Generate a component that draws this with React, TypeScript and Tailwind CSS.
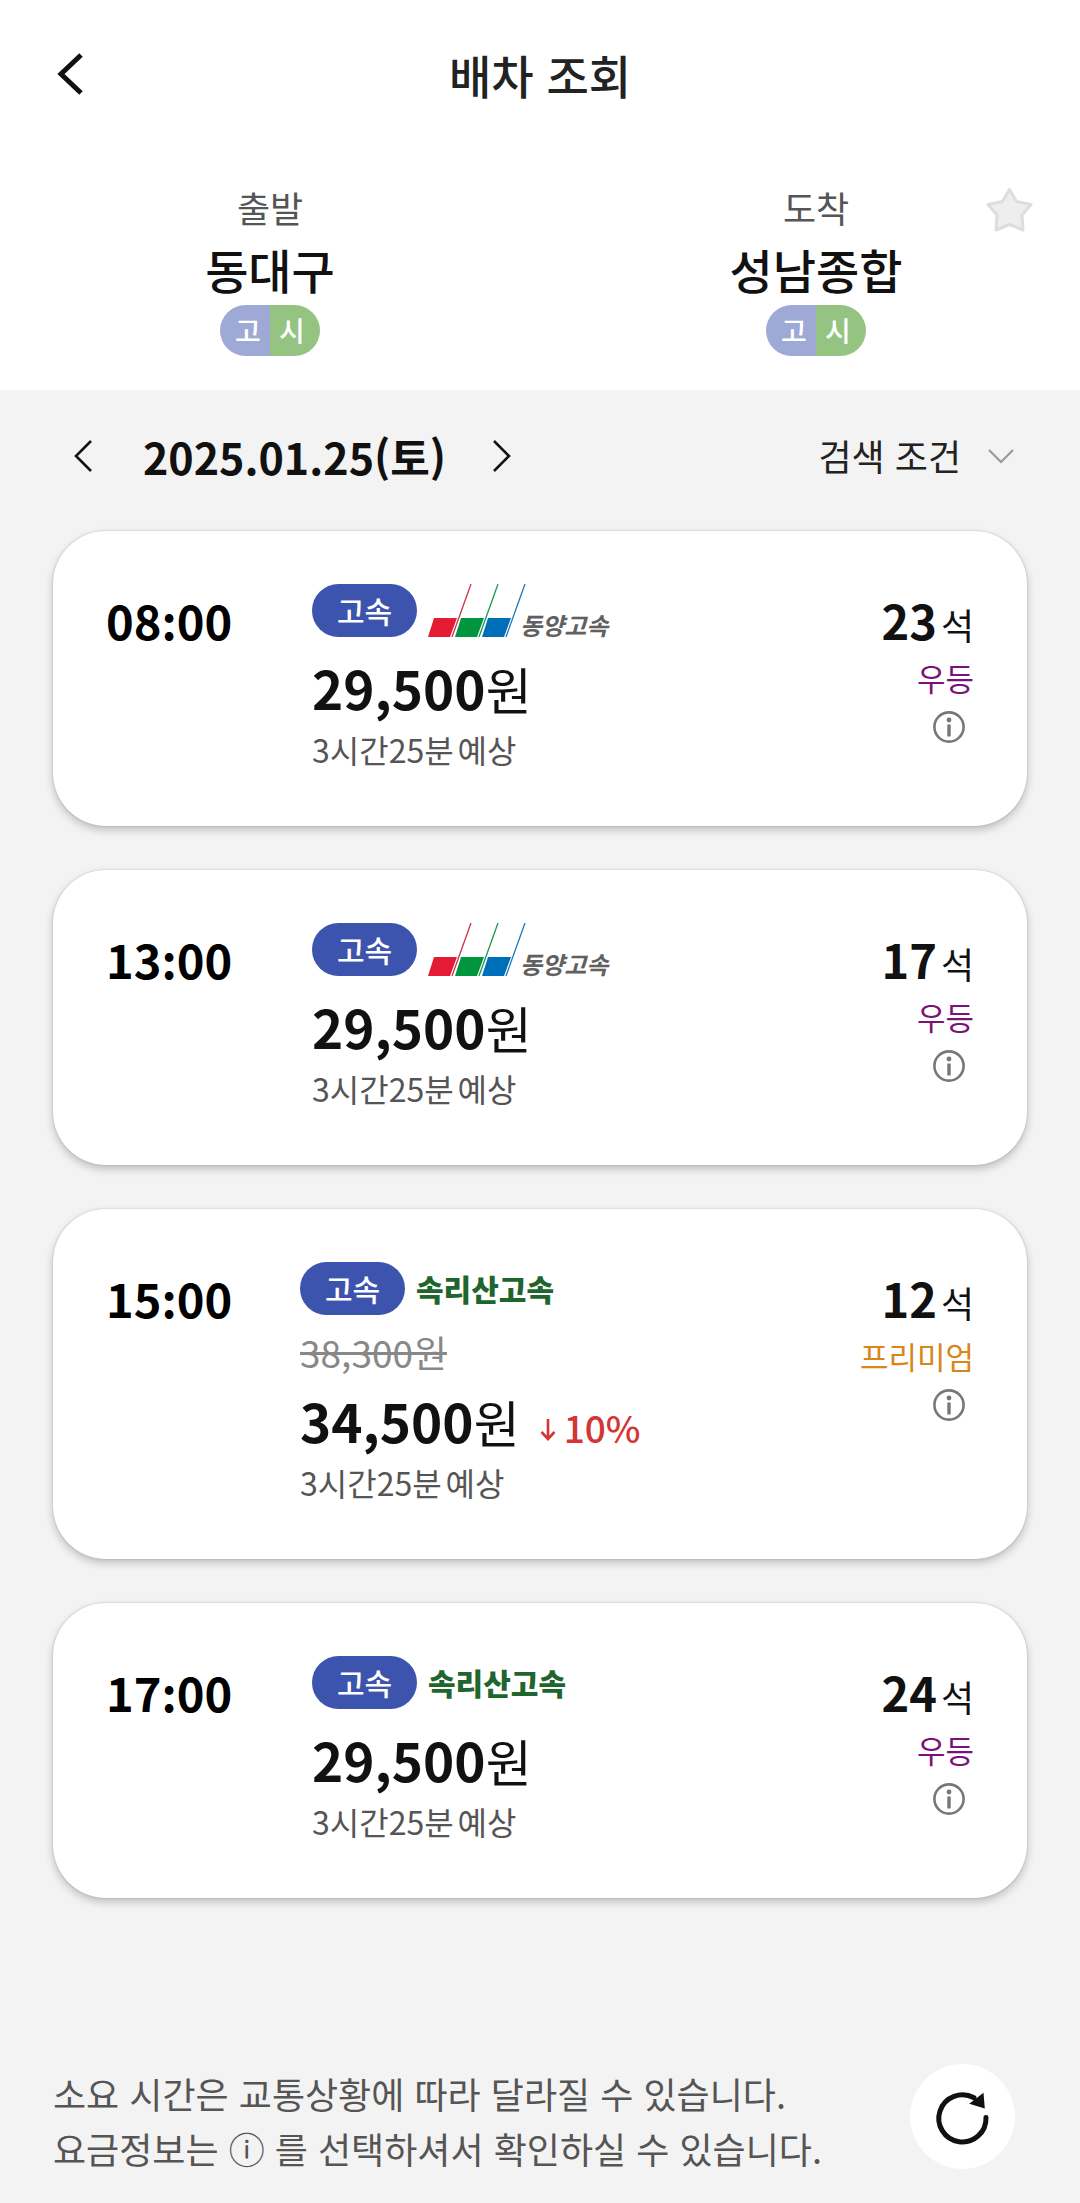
import clsx from "clsx";

type Company = "dongyang" | "songnisan";
type Grade = "우등" | "프리미엄";

interface Bus {
  time: string;
  company: Company;
  price: string;
  originalPrice?: string;
  discount?: string;
  hours: string;
  seats: number;
  grade: Grade;
}

const buses: Bus[] = [
  { time: "08:00", company: "dongyang", price: "29,500", hours: "3시간25분", seats: 23, grade: "우등" },
  { time: "13:00", company: "dongyang", price: "29,500", hours: "3시간25분", seats: 17, grade: "우등" },
  {
    time: "15:00",
    company: "songnisan",
    price: "34,500",
    originalPrice: "38,300원",
    discount: "10%",
    hours: "3시간25분",
    seats: 12,
    grade: "프리미엄",
  },
  { time: "17:00", company: "songnisan", price: "29,500", hours: "3시간25분", seats: 24, grade: "우등" },
];

function DongyangLogo() {
  return (
    <span className="flex items-end">
      <svg width="98" height="53" viewBox="0 0 98 53" fill="none">
        <path d="M6 34H29L22 53H0Z" fill="#e31b35" />
        <path d="M33 34H56L49 53H27Z" fill="#00953f" />
        <path d="M60 34H83L76 53H54Z" fill="#006fb9" />
        <path d="M43 0L24 53" stroke="#d0304c" strokeWidth="1.3" />
        <path d="M70 0L51 53" stroke="#1c9651" strokeWidth="1.3" />
        <path d="M97 0L78 53" stroke="#1c78b4" strokeWidth="1.3" />
      </svg>
      <span className="-mb-0.5 -ml-1.5 text-2xl/7 font-bold text-[#606060] italic">동양고속</span>
    </span>
  );
}

function SongnisanLogo() {
  return <span className="text-[30px]/[53px] font-black text-[#1f652e]">속리산고속</span>;
}

function StopTypes() {
  return (
    <div className="mt-1 flex h-[51px] overflow-hidden rounded-full text-[28px]/[51px] font-medium text-white">
      <span className="w-[50px] bg-[#9ea9d6] pl-1.5 text-center">고</span>
      <span className="w-[50px] bg-[#95c482] pr-1.5 text-center">시</span>
    </div>
  );
}

function Terminal({ label, name }: { label: string; name: string }) {
  return (
    <div className="flex flex-col items-center">
      <span className="text-[36px]/[56px] text-[#555]">{label}</span>
      <strong className="mt-0.5 text-[47px]/[64px] font-medium text-[#111]">{name}</strong>
      <StopTypes />
    </div>
  );
}

function InfoIcon() {
  return (
    <svg width="34" height="34" viewBox="0 0 34 34" fill="none">
      <circle cx="17" cy="17" r="14.6" stroke="#777" strokeWidth="2.6" />
      <circle cx="17" cy="10" r="2.4" fill="#777" />
      <path d="M17 14.5V26.5" stroke="#777" strokeWidth="3.4" />
    </svg>
  );
}

function BusCard({ bus }: { bus: Bus }) {
  return (
    <li className="flex rounded-[53px] bg-white p-[53px] shadow-[0_0_2px_rgba(0,0,0,0.2),0_4px_8px_rgba(0,0,0,0.22)]">
      {/* the Korean face raises the colon, the Japanese one keeps it on the baseline */}
      <time
        lang="en"
        className={clsx(
          "mt-1 shrink-0 font-['Noto_Sans_CJK_JP',sans-serif] text-[47px]/[64px] font-bold text-black",
          bus.discount ? "w-[194px]" : "w-[206px]",
        )}
      >
        {bus.time}
      </time>

      <div className="flex-1">
        <div className="flex h-[53px] items-center gap-[11px]">
          <span className="w-[105px] rounded-full bg-[#3c54ad] text-center text-[30px]/[53px] font-medium text-white">
            고속
          </span>
          {bus.company === "dongyang" ? <DongyangLogo /> : <SongnisanLogo />}
        </div>
        {bus.originalPrice && (
          <del className="mt-2.5 -mb-2.5 block text-[37px]/[55px] text-[#888]">{bus.originalPrice}</del>
        )}
        <div className="mt-3.5 flex items-baseline text-[#111]">
          <strong className="text-[53px]/[72px] font-bold">{bus.price}</strong>
          <span className="text-[50px]/[64px]">원</span>
          {bus.discount && (
            <span className="ml-5 flex items-baseline gap-2 text-[37px]/[55px] font-medium text-[#d43535]">
              <svg width="16" height="24" viewBox="0 0 16 24" fill="none" stroke="currentColor" strokeWidth="2.6">
                <path d="M8 0V19M1.5 13L8 20L14.5 13" />
              </svg>
              {bus.discount}
            </span>
          )}
        </div>
        <p className="mt-1 mb-0.5 flex gap-1 text-[32px]/[44px] text-[#555]">
          <span>{bus.hours}</span>
          <span>예상</span>
        </p>
      </div>

      <div className="mt-1 flex flex-col items-end">
        <p className="flex items-baseline gap-1 text-[#111]">
          <strong className="text-[47px]/[64px] font-bold">{bus.seats}</strong>
          <span className="text-[36px]/[55px]">석</span>
        </p>
        <span
          className={clsx(
            "mt-0.5 text-[31px]/[48px]",
            bus.grade === "프리미엄" ? "text-[#d9861a]" : "text-[#7a1377]",
          )}
        >
          {bus.grade}
        </span>
        <button type="button" className="mt-2 mr-2" aria-label="요금 정보">
          <InfoIcon />
        </button>
      </div>
    </li>
  );
}

export default function App() {
  return (
    <div
      lang="ko"
      className="min-h-screen bg-[#f3f3f3] font-['Noto_Sans_CJK_KR',sans-serif] text-[#111]"
    >
      <header className="bg-white">
        <div className="grid grid-cols-[1fr_auto_1fr] items-center px-14 pt-[38px]">
          <button type="button" className="justify-self-start" aria-label="뒤로">
            <svg width="30" height="44" viewBox="0 0 30 44" fill="none" stroke="#111" strokeWidth="5">
              <path d="M25 3L5 22L25 41" />
            </svg>
          </button>
          <h1 className="text-[46px]/[72px] font-medium text-[#222]">배차 조회</h1>
        </div>

        <div className="relative grid grid-cols-2 pt-[69px] pb-[34px]">
          <Terminal label="출발" name="동대구" />
          <div className="pl-3">
            <Terminal label="도착" name="성남종합" />
          </div>
          <button type="button" className="absolute top-[74px] right-[47px]" aria-label="즐겨찾기">
            <svg width="48" height="48" viewBox="0 0 48 48">
              <path
                d="M24.5 5.5L31.5 17.5L46 20.5L37 31L38 46L24.5 40.5L11 46L12 31L3 20.5L17.5 17.5Z"
                fill="#eee"
                stroke="#ddd"
                strokeWidth="3"
                strokeLinejoin="round"
              />
            </svg>
          </button>
        </div>
      </header>

      <main className="px-[53px]">
        <div className="flex h-[141px] items-center justify-between pr-3 pb-2.5 pl-5">
          <div className="flex items-center">
            <button type="button" aria-label="이전 날짜">
              <svg width="22" height="34" viewBox="0 0 22 34" fill="none" stroke="#111" strokeWidth="2.6">
                <path d="M18 2L3 17L18 32" />
              </svg>
            </button>
            <strong className="mr-11 ml-12 text-[43px]/[56px] font-bold">2025.01.25(토)</strong>
            <button type="button" aria-label="다음 날짜">
              <svg width="22" height="34" viewBox="0 0 22 34" fill="none" stroke="#111" strokeWidth="2.6">
                <path d="M4 2L19 17L4 32" />
              </svg>
            </button>
          </div>
          <button type="button" className="flex items-center gap-[26px] text-[36px]/[55px] text-[#222]">
            검색 조건
            <svg width="28" height="16" viewBox="0 0 28 16" fill="none" stroke="#999" strokeWidth="2.2">
              <path d="M2 2L14 14L26 2" />
            </svg>
          </button>
        </div>

        <ul className="flex flex-col gap-11">
          {buses.map((bus) => (
            <BusCard key={bus.time} bus={bus} />
          ))}
        </ul>
      </main>

      <footer className="mt-[166px] flex items-start justify-between pr-[65px] pb-[27px] pl-[53px]">
        <p className="pt-0.5 text-[36px]/[55px] text-[#555]">
          소요 시간은 교통상황에 따라 달라질 수 있습니다.
          <br />
          요금정보는 ⓘ 를 선택하셔서 확인하실 수 있습니다.
        </p>
        <button
          type="button"
          className="flex size-[105px] shrink-0 items-center justify-center rounded-full bg-white"
          aria-label="새로고침"
        >
          <svg width="60" height="60" viewBox="0 0 60 60" fill="none">
            <path d="M53 30.5A23.6 23.6 0 1 1 41 10.8" stroke="#111" strokeWidth="5" strokeLinecap="round" />
            <path d="M50.5 5.8L51.8 21.5L36.2 16.8Z" fill="#111" />
          </svg>
        </button>
      </footer>
    </div>
  );
}
